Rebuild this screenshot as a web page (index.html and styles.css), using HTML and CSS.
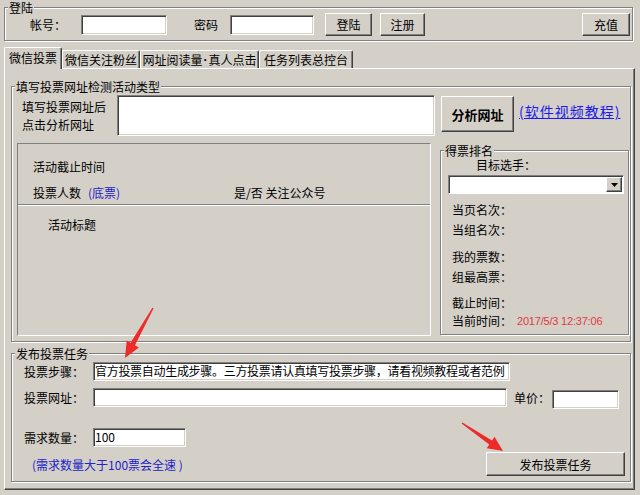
FILE: index.html
```html
<!DOCTYPE html>
<html lang="zh-CN">
<head>
<meta charset="utf-8">
<title>投票</title>
<link rel="stylesheet" href="styles.css">
</head>
<body>
<div class="win">
  <div class="gb login">
    <div class="gb-title">登陆</div>
    <div class="login-row">
      <span class="lbl lbl-acct">帐号：</span>
      <div class="tb tb-acct"></div>
      <span class="lbl lbl-pwd">密码</span>
      <div class="tb tb-pwd"></div>
      <div class="btn btn-login">登陆</div>
      <div class="btn btn-reg">注册</div>
      <div class="btn btn-pay">充值</div>
    </div>
  </div>

  <div class="tabs">
    <div class="tab tab-active t1">微信投票</div>
    <div class="tab t2">微信关注粉丝</div>
    <div class="tab t3">网址阅读量<span class="dot">·</span>真人点击</div>
    <div class="tab t4">任务列表总控台</div>
  </div>

  <div class="panel">
    <div class="gb gb1">
      <div class="gb-title">填写投票网址检测活动类型</div>
      <div class="row1">
        <div class="url-lbl">填写投票网址后<br>点击分析网址</div>
        <div class="tb tb-url"></div>
        <div class="btn btn-analyze">分析网址</div>
        <a class="link">(软件视频教程)</a>
      </div>
      <div class="row2">
        <div class="sunken">
          <div class="s-line s-l1">活动截止时间</div>
          <div class="s-line s-l2">
            <span class="s-count">投票人数</span><span class="blue">(底票)</span><span class="s-follow">是/否 关注公众号</span>
          </div>
          <div class="etch"></div>
          <div class="s-line s-l3">活动标题</div>
        </div>
        <div class="gb gb-rank">
          <div class="gb-title">得票排名</div>
          <div class="target">目标选手：</div>
          <div class="combo"><div class="combo-btn"><svg width="7" height="4" viewBox="0 0 7 4"><path d="M0 0H7L3.5 4Z" fill="#000"/></svg></div></div>
          <div class="r-line m8">当页名次：</div>
          <div class="r-line m4">当组名次：</div>
          <div class="r-line m11">我的票数：</div>
          <div class="r-line m4">组最高票：</div>
          <div class="r-line m10">截止时间：</div>
          <div class="r-line m2"><span class="r-lbl">当前时间：</span><span class="date">2017/5/3 12:37:06</span></div>
        </div>
      </div>
    </div>

    <div class="gb gb2">
      <div class="gb-title">发布投票任务</div>
      <div class="frow f1">
        <span class="flbl">投票步骤：</span>
        <div class="tb tb-steps">官方投票自动生成步骤。三方投票请认真填写投票步骤，请看视频教程或者范例</div>
      </div>
      <div class="frow f2">
        <span class="flbl">投票网址：</span>
        <div class="tb tb-vurl"></div>
        <span class="price-lbl">单价：</span>
        <div class="tb tb-price"></div>
      </div>
      <div class="frow f3">
        <span class="flbl">需求数量：</span>
        <div class="tb tb-qty">100</div>
      </div>
      <div class="frow f4">
        <span class="blue hint">(需求数量大于100票会全速 )</span>
        <div class="btn btn-publish">发布投票任务</div>
      </div>
    </div>
  </div>

  <svg class="arrows" width="640" height="495" viewBox="0 0 640 495">
    <polygon fill="#ee2a2a" points="153.6,308.3 135,345.2 138.9,347.4 125,358 126.7,340.6 130.6,342.8 152.4,307.7"/>
    <polygon fill="#ee2a2a" points="461.6,423.5 489.2,444.6 486.7,448.3 503,451 494.5,436.7 492,440.4 462.4,422.5"/>
  </svg>
</div>
</body>
</html>
```

FILE: styles.css
```css
* { box-sizing: border-box; }
html, body { margin: 0; padding: 0; background: #d4d0c8; }
body {
  font-family: "Noto Sans CJK SC", "Liberation Sans", sans-serif;
  font-size: 12px;
  color: #000;
}
.win {
  position: relative;
  width: 640px;
  height: 495px;
  overflow: hidden;
  padding-top: 7px;
}

/* group box */
.gb {
  border: 1px solid #808080;
  box-shadow: inset 1px 1px 0 #fff, 1px 1px 0 #fff;
}
.gb-title {
  width: max-content;
  margin: -7px 0 0 3px;
  padding: 0 1px;
  background: #d4d0c8;
  line-height: 13px;
  height: 12px;
}

/* text box */
.tb {
  background: #fff;
  border-top: 1px solid #808080;
  border-left: 1px solid #808080;
  border-bottom: 1px solid #fff;
  border-right: 1px solid #fff;
  box-shadow: inset 1px 1px 0 #404040, inset -1px -1px 0 #d4d0c8;
  height: 20px;
  line-height: 17px;
  padding-left: 2px;
  white-space: nowrap;
  overflow: hidden;
}

/* button */
.btn {
  border-top: 1px solid #fff;
  border-left: 1px solid #fff;
  border-bottom: 1px solid #404040;
  border-right: 1px solid #404040;
  box-shadow: inset -1px -1px 0 #808080;
  display: flex;
  align-items: center;
  justify-content: center;
  height: 23px;
}

/* login */
.login {
  margin: 0 7px 0 4px;
  padding: 0 2px 4px 0;
}
.login-row {
  display: flex;
  align-items: center;
  margin-top: 0;
  height: 23px;
  padding-left: 25px;
}
.lbl-acct { width: 51px; }
.tb-acct { width: 86px; }
.lbl-pwd { width: 36px; margin-left: 27px; }
.tb-pwd { width: 84px; }
.btn-login { width: 47px; margin-left: 11px; }
.btn-reg { width: 45px; margin-left: 8px; }
.btn-pay { width: 48px; margin-left: auto; }

/* tabs */
.tabs {
  display: flex;
  align-items: flex-end;
  margin: 6px 0 0 4px;
  height: 21px;
}
.tab {
  height: 18px;
  border-top: 1px solid #fff;
  border-left: 1px solid #fff;
  border-right: 1px solid #404040;
  box-shadow: inset -1px 0 0 #808080;
  border-radius: 2px 2px 0 0;
  display: flex;
  align-items: center;
  justify-content: center;
  line-height: 14px;
  white-space: nowrap;
}
.dot { font-family: "Liberation Sans", sans-serif; font-weight: bold; padding: 0 1px; }
.tab-active {
  height: 22px;
  margin-bottom: -1px;
  position: relative;
  z-index: 1;
  background: #d4d0c8;
  padding-bottom: 2px;
}
.t1 { width: 58px; }
.t2 { width: 78px; }
.t3 { width: 119px; }
.t4 { width: 94px; }

/* panel */
.panel {
  margin-left: 4px;
  width: 631px;
  height: 422px;
  border-top: 1px solid #fff;
  border-left: 1px solid #fff;
  border-bottom: 1px solid #404040;
  border-right: 1px solid #404040;
  box-shadow: inset -1px -1px 0 #808080;
  padding-top: 17px;
  padding-left: 6px;
}

.gb1 {
  width: 620px;
  padding-bottom: 5px;
}
.row1 {
  display: flex;
  align-items: flex-start;
  margin: 3px 0 0 10px;
  height: 41px;
}
.url-lbl {
  width: 95px;
  line-height: 18px;
  padding-top: 3px;
}
.tb-url { width: 318px; height: 41px; }
.btn-analyze {
  width: 73px;
  height: 36px;
  margin: 1px 0 0 6px;
  font-weight: bold;
  font-size: 13px;
}
.link {
  margin: 7px 0 0 5px;
  color: #1a1aee;
  text-decoration: underline;
  font-size: 14px;
  letter-spacing: 1px;
  line-height: 18px;
  cursor: pointer;
}

.row2 {
  display: flex;
  align-items: flex-start;
  margin: 7px 0 0 5px;
  height: 193px;
}
.sunken {
  width: 414px;
  height: 193px;
  border-top: 1px solid #808080;
  border-left: 1px solid #808080;
  border-bottom: 1px solid #fff;
  border-right: 1px solid #fff;
}
.s-line { line-height: 16px; padding-left: 15px; white-space: nowrap; }
.s-l1 { margin-top: 15px; }
.s-l2 { margin-top: 10px; display: flex; }
.s-count { width: 55px; }
.s-follow { margin-left: auto; width: 196px; }
.s-l2 .blue { width: 74px; }
.etch {
  margin-top: 3px;
  height: 2px;
  border-top: 1px solid #808080;
  border-bottom: 1px solid #fff;
}
.s-l3 { margin-top: 11px; padding-left: 30px; }

.blue { color: #2323c8; }

.gb-rank {
  width: 189px;
  height: 185px;
  margin: 7px 0 0 9px;
}
.target {
  line-height: 13px;
  margin-top: 2px;
  padding-left: 35px;
}
.combo {
  width: 176px;
  height: 19px;
  margin: 4px 0 0 7px;
  background: #fff;
  border-top: 1px solid #808080;
  border-left: 1px solid #808080;
  border-bottom: 1px solid #fff;
  border-right: 1px solid #fff;
  box-shadow: inset 1px 1px 0 #404040;
  display: flex;
  justify-content: flex-end;
  padding: 1px 1px 1px 0;
}
.combo-btn {
  width: 16px;
  height: 15px;
  background: #d4d0c8;
  border-top: 1px solid #fff;
  border-left: 1px solid #fff;
  border-bottom: 1px solid #404040;
  border-right: 1px solid #404040;
  box-shadow: inset -1px -1px 0 #808080;
  display: flex;
  align-items: center;
  justify-content: center;
}
.r-line { line-height: 16px; margin-left: 11px; display: flex; white-space: nowrap; }
.m2 { margin-top: 2px; }
.m4 { margin-top: 4px; }
.m8 { margin-top: 8px; }
.m10 { margin-top: 10px; }
.m11 { margin-top: 11px; }
.r-lbl { width: 65px; }
.date {
  color: #e23a3a;
  font-family: "Liberation Sans", Arial, sans-serif;
  font-size: 11px;
  letter-spacing: -0.2px;
}

.gb2 {
  width: 620px;
  margin-top: 11px;
  padding-bottom: 5px;
}
.frow { display: flex; align-items: center; padding-left: 12px; }
.flbl { width: 69px; }
.f1 { margin-top: 3px; }
.f1 .tb, .f2 .tb, .f3 .tb { height: 19px; line-height: 16px; }
.tb-steps { width: 417px; padding-left: 1px; letter-spacing: -0.3px; }
.f2 { margin-top: 7px; align-items: flex-start; height: 21px; }
.f2 .flbl, .f2 .price-lbl { line-height: 20px; }
.tb-vurl { width: 414px; }
.price-lbl { margin-left: 7px; width: 38px; line-height: 22px; }
.tb-price { width: 67px; margin-top: 2px; }
.f3 { margin-top: 19px; }
.tb-qty { width: 93px; padding-left: 1px; }
.f4 { margin-top: 5px; padding-left: 20px; height: 24px; }
.hint { line-height: 16px; margin-top: 2px; }
.btn-publish { width: 139px; height: 24px; margin-left: auto; margin-right: 5px; }

.arrows {
  position: absolute;
  left: 0;
  top: 0;
  pointer-events: none;
}
```
